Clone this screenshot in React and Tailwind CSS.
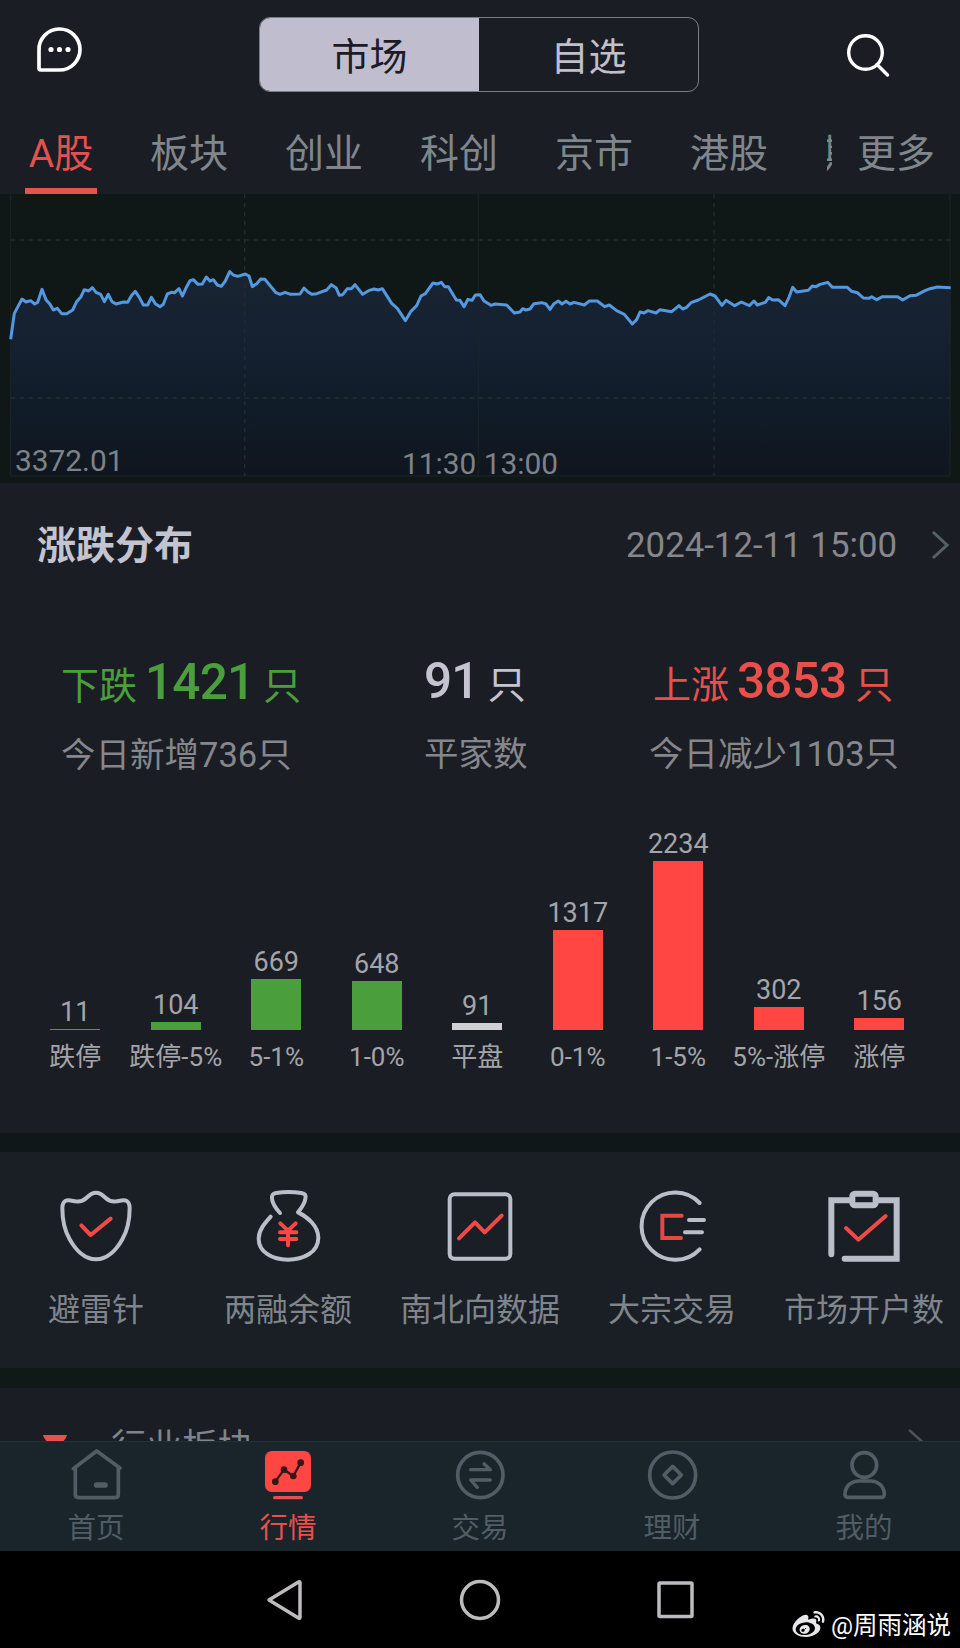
import React from 'react';
import { FaWeibo } from 'react-icons/fa';

const tabs = ['板块', '创业', '科创', '京市', '港股'];

// Intraday index line, in the units of the chart's viewBox
const linePoints =
  '32,448 43,370 66,327 78,336 92,332 104,342 113,337 126,298 138,329 150,343 160,360 172,355 185,371 200,371 218,360 230,335 243,320 253,299 266,303 277,293 288,307 302,313 313,335 325,313 336,335 348,342 370,336 383,337 395,316 406,304 418,322 430,345 443,345 454,322 466,341 480,350 490,343 502,312 514,307 524,308 537,296 547,318 560,290 570,272 580,269 594,283 607,282 619,261 630,273 640,269 652,285 664,289 676,273 689,245 700,255 713,259 736,252 747,258 757,290 770,281 782,267 795,268 807,283 828,308 840,313 855,307 872,313 900,312 912,294 924,306 936,313 950,311 980,300 994,284 1008,293 1018,316 1028,314 1042,296 1054,296 1065,284 1088,313 1108,301 1122,297 1135,300 1147,296 1175,340 1192,355 1216,392 1232,365 1250,347 1263,318 1276,311 1299,279 1312,282 1324,277 1334,290 1345,290 1369,330 1380,331 1392,350 1404,328 1416,331 1426,315 1440,314 1452,333 1473,346 1485,342 1520,345 1543,369 1560,366 1568,356 1578,360 1590,357 1602,341 1625,338 1638,342 1650,358 1662,341 1675,333 1686,342 1698,334 1710,342 1722,337 1753,345 1768,333 1792,333 1814,350 1828,345 1850,362 1873,373 1897,402 1910,389 1920,366 1932,369 1944,362 1968,369 1980,359 2015,365 2037,347 2048,357 2060,352 2073,338 2095,330 2130,312 2145,318 2166,346 2178,331 2204,347 2224,336 2248,347 2262,333 2272,345 2296,337 2306,323 2318,330 2335,329 2355,347 2367,322 2378,292 2390,306 2425,301 2437,288 2448,290 2460,283 2483,277 2497,292 2542,292 2555,304 2572,308 2590,324 2607,325 2615,320 2630,329 2648,320 2693,320 2708,330 2730,317 2748,316 2775,302 2790,296 2812,291 2852,293';

const bars = [
  { label: '跌停', value: 11, height: 1, color: 'bg-[#4a9f3c]' },
  { label: '跌停-5%', value: 104, height: 8, color: 'bg-[#4a9f3c]' },
  { label: '5-1%', value: 669, height: 51, color: 'bg-[#4a9f3c]' },
  { label: '1-0%', value: 648, height: 49, color: 'bg-[#4a9f3c]' },
  { label: '平盘', value: 91, height: 7, color: 'bg-[#cfcfd4]' },
  { label: '0-1%', value: 1317, height: 100, color: 'bg-[#ff4643]' },
  { label: '1-5%', value: 2234, height: 169, color: 'bg-[#ff4643]' },
  { label: '5%-涨停', value: 302, height: 23, color: 'bg-[#ff4643]' },
  { label: '涨停', value: 156, height: 12, color: 'bg-[#ff4643]' }
];

const ShieldIcon = () => (
  <>
    <path d="M120 20C106 20 99 28 91 36C83 44 74 48 58 46C47 44 38 41 29 44C21 48 19 55 19 66C19 102 25 132 41 160C58 191 86 220 120 220C154 220 182 191 199 160C215 132 221 102 221 66C221 55 219 48 211 44C202 41 193 44 182 46C166 48 157 44 149 36C141 28 134 20 120 20Z" />
    <path d="M76 118L104 147L164 98" className="stroke-[#f04a47]" />
  </>
);

const MoneyBagIcon = () => (
  <>
    <path d="M96 81C84 68 73 55 72 38C71 27 74 23 84 21C108 17 136 17 160 21C171 23 175 27 172 38C170 54 160 66 150 79C178 92 211 120 211 155C211 200 165 221 120 221C72 221 32 198 32 158C32 132 50 112 68 92" />
    <path d="M97 112L120 134L143 112M120 134V178M96 139H145M96 159H145" className="stroke-[#ff4643]" />
  </>
);

const TrendBoxIcon = () => (
  <>
    <rect x="29" y="25" width="182" height="193" rx="14" />
    <path d="M57 157L105 109L134 139L185 89" className="stroke-[#f04a47]" />
  </>
);

const BlockTradeIcon = () => (
  <>
    <path d="M203 51A101 101 0 1 0 203 190" />
    <path d="M171 102H216M159 139H210" />
    <path d="M149 89H91V156H147" className="stroke-[#e04a47]" strokeLinejoin="miter" />
  </>
);

const ClipboardIcon = () => (
  <>
    <path d="M22 205V43H76M164 43H218V218H62" strokeWidth="18" strokeLinejoin="miter" />
    <rect x="85" y="23" width="70" height="35" rx="8" strokeWidth="18" />
    <path d="M66 126L103 161L185 90" className="stroke-[#f04a47]" />
  </>
);

const tools = [
  { name: '避雷针', icon: ShieldIcon },
  { name: '两融余额', icon: MoneyBagIcon },
  { name: '南北向数据', icon: TrendBoxIcon },
  { name: '大宗交易', icon: BlockTradeIcon },
  { name: '市场开户数', icon: ClipboardIcon }
];

const HomeIcon = () => (
  <>
    <path d="M22 71L92 18L162 69M28 70V148Q28 158 38 158H147Q157 158 157 148V70" />
    <path d="M92 120H117" strokeWidth="17" />
  </>
);

const MarketIcon = () => (
  <>
    <rect x="21" y="18" width="138" height="123" rx="20" className="fill-[#ff4643] stroke-none" />
    <path d="M52 110L78 74L106 93L128 53" className="stroke-[#3a1518]" strokeWidth="7" />
    <g className="fill-[#3a1518] stroke-none">
      <circle cx="52" cy="110" r="10" />
      <circle cx="78" cy="74" r="10" />
      <circle cx="106" cy="93" r="10" />
      <circle cx="128" cy="53" r="10" />
    </g>
    <path d="M50 158H130" strokeWidth="10" />
  </>
);

const TradeIcon = () => (
  <>
    <circle cx="91" cy="90" r="68" />
    <path d="M62 74H121L102 56M121 105H62L82 127" strokeWidth="10" />
  </>
);

const FinanceIcon = () => (
  <>
    <circle cx="92" cy="90" r="69" />
    <path d="M92 64L118 90L92 116L66 90Z" />
  </>
);

const ProfileIcon = () => (
  <>
    <circle cx="91" cy="60" r="37" />
    <path d="M33 148C33 122 54 108 74 108H110C130 108 151 122 151 148Q151 157 143 157H41Q33 157 33 148Z" />
  </>
);

const navItems = [
  { name: '首页', icon: HomeIcon },
  { name: '行情', icon: MarketIcon, active: true },
  { name: '交易', icon: TradeIcon },
  { name: '理财', icon: FinanceIcon },
  { name: '我的', icon: ProfileIcon }
];

const Header = () => (
  <header className="h-[91px] flex items-start justify-between pl-[36px] pr-[70px]">
    <svg className="w-[48px] h-[48px] mt-[26px]" viewBox="0 0 48 48" fill="none">
      <path d="M3 24A20.5 20.5 0 1 1 23.5 44H5Q3 44 3 42Z" stroke="#fff" strokeWidth="3.7" />
      <circle cx="15" cy="23.5" r="2.6" fill="#fff" />
      <circle cx="23.5" cy="23.5" r="2.6" fill="#fff" />
      <circle cx="32" cy="23.5" r="2.6" fill="#fff" />
    </svg>
    <div className="w-[440px] h-[75px] mt-[17px] ml-[28px] flex rounded-[11px] border border-[#7c7c86] overflow-hidden text-[38px] leading-none">
      <div className="w-[219px] pt-[5px] flex items-center justify-center bg-[#c0bdce] text-[#1c1b26]">市场</div>
      <div className="flex-1 pt-[5px] flex items-center justify-center text-[#c0bfcb]">自选</div>
    </div>
    <svg className="w-[44px] h-[44px] mt-[34px]" viewBox="0 0 44 44" fill="none" stroke="#fff" strokeWidth="3.4" strokeLinecap="round">
      <circle cx="19.5" cy="18.5" r="16.8" />
      <path d="M31 30.5L41.500 41" />
    </svg>
  </header>
);

const MarketTabs = () => (
  <nav className="h-[103px] flex pl-[25px] text-[39px] leading-[40px] text-[#7f878d]">
    <div className="w-[72px] mr-[53px] flex flex-col justify-between items-center text-[#e3524e]">
      <span className="mt-[43px]">A股</span>
      <span className="w-full h-[6px] bg-[#e3554f]" />
    </div>
    {tabs.map((tab) => (
      <span key={tab} className="mt-[43px] w-[135px] shrink-0">{tab}</span>
    ))}
    {/* next tab, scrolled mostly under the "more" button */}
    <span className="mt-[43px] ml-[2px] w-[5px] shrink-0 overflow-hidden -indent-[4px]">期</span>
    <span className="mt-[43px] ml-[25px] shrink-0">更多</span>
  </nav>
);

const IndexChart = () => (
  <section className="h-[289px] bg-[#101717]">
    <svg className="block w-full h-full" viewBox="0 12 2880 867" fill="none">
      <defs>
        <linearGradient id="area" x1="0" y1="240" x2="0" y2="860" gradientUnits="userSpaceOnUse">
          <stop offset="0" stopColor="#1a2433" />
          <stop offset="0.4" stopColor="#142030" />
          <stop offset="0.7" stopColor="#0f1b26" />
          <stop offset="1" stopColor="#10161f" />
        </linearGradient>
      </defs>
      <polygon points={`${linePoints} 2852,858 32,858`} fill="url(#area)" />
      <g stroke="#232b2c" strokeWidth="4">
        <path d="M32 12V858H2850V12M1435 12V858" strokeWidth="3" stroke="#1c2526" />
        <path d="M32 150H2850M32 624H2850M734 12V858M2142 12V858" strokeDasharray="13 14" />
      </g>
      <polyline points={linePoints} stroke="#5498e0" strokeWidth="9" strokeLinejoin="round" />
      <g fill="#7f8287" className="font-['Roboto'] text-[89.500px]">
        <text x="45" y="843">3372.01</text>
        <text x="1206" y="852">11:30 13:00</text>
      </g>
    </svg>
  </section>
);

const Stat = ({ prefix, count, note, className, rowClass }) => (
  <div className={className}>
    <div className={`flex items-baseline text-[38px] leading-[56px] ${rowClass || ''}`}>
      {prefix && <span className="mr-[8px]">{prefix}</span>}
      <span className="text-[49.500px] font-medium tracking-[-0.8px]">{count}</span>
      <span className="ml-[9px]">只</span>
    </div>
    <div className="mt-[21px] text-[34.500px] leading-[40px] text-[#85878c]">{note}</div>
  </div>
);

const Distribution = () => (
  <section className="h-[650px]">
    <div className="h-[126px] pl-[37px] pr-[11px] flex items-center">
      <h2 className="text-[39px] leading-none font-bold text-[#c3c4d0]">涨跌分布</h2>
      <span className="ml-auto mb-[2px] text-[34.800px] leading-none text-[#85878c]">2024-12-11 15:00</span>
      <svg className="ml-[34px] mb-[3px] w-[18px] h-[30px]" viewBox="0 0 18 30" fill="none" stroke="#566167" strokeWidth="3">
        <path d="M2 2L16 15L2 28" />
      </svg>
    </div>
    <div className="h-[224px] pt-[44px] flex">
      <Stat prefix="下跌" count="1421" note="今日新增736只" className="w-[364px] pl-[61px] pt-[1px] text-[#4a9f3c]" />
      <Stat count="91" note="平家数" className="w-[225px] pl-[60px] text-[#c3c4d0]" />
      <Stat prefix="上涨" count="3853" note="今日减少1103只" className="pl-[60px] text-[#e9504c]" rowClass="pl-[4px]" />
    </div>
    <div className="h-[240px] pl-[25px] flex text-[#a3a5a9]">
      {bars.map((bar) => (
        <div key={bar.label} className="w-[100.500px] flex flex-col items-center justify-end whitespace-nowrap">
          <span className="text-[27px] leading-[30px] mb-[2px]">{bar.value}</span>
          <div className={`w-[50px] shrink-0 ${bar.color}`} style={{ height: bar.height }} />
          <span className="mt-[11px] text-[26px] leading-[32px]">{bar.label}</span>
        </div>
      ))}
    </div>
  </section>
);

const ToolGrid = () => (
  <section className="h-[216px] grid grid-cols-5 bg-[#1a1e25]">
    {tools.map((tool) => {
      const Icon = tool.icon;
      return (
        <div key={tool.name} className="flex flex-col items-center pt-[34px]">
          <svg className="w-[80px] h-[80px]" viewBox="0 0 240 240" fill="none" stroke="#b9bec9" strokeWidth="12" strokeLinecap="round" strokeLinejoin="round">
            <Icon />
          </svg>
          <span className="mt-[24px] text-[32px] leading-[40px] text-[#7f858b] whitespace-nowrap">{tool.name}</span>
        </div>
      );
    })}
  </section>
);

const BottomNav = () => (
  <nav className="h-[110px] grid grid-cols-5 bg-[#19242b] border-t border-[#213338]">
    {navItems.map((item) => {
      const Icon = item.icon;
      return (
        <div
          key={item.name}
          className={`flex flex-col items-center pt-[3px] ${item.active ? 'text-[#e9504c]' : 'text-[#515c64]'}`}
        >
          <svg className="w-[60px] h-[60px]" viewBox="0 0 180 180" fill="none" stroke="currentColor" strokeWidth="11" strokeLinecap="round" strokeLinejoin="round">
            <Icon />
          </svg>
          <span className="mt-[6px] text-[28.500px] leading-[36px]">{item.name}</span>
        </div>
      );
    })}
  </nav>
);

const SystemBar = () => (
  <footer className="relative h-[97px] bg-black">
    <svg className="block w-full h-full" viewBox="0 0 960 97" fill="none" stroke="#bdbbbf" strokeWidth="3.5" strokeLinejoin="round">
      <path d="M269 49L298.500 31Q300 30 300 32V66Q300 68 298.500 67Z" />
      <circle cx="480" cy="49" r="18.500" />
      <rect x="659" y="32" width="33" height="33.500" rx="1" />
    </svg>
    <div className="absolute right-[9px] bottom-[5px] flex items-center text-white">
      <FaWeibo className="w-[35px] h-[32px] mr-[5px] mb-[2px] text-[#e8e8ea]" />
      <span className="text-[24.500px] leading-[30px]">@周雨涵说</span>
    </div>
  </footer>
);

const App = () => {
  return (
    <div className="w-[960px] h-[1648px] overflow-hidden bg-[#1b1d24] font-['Roboto','Noto_Sans_CJK_SC',sans-serif]">
      <Header />
      <MarketTabs />
      <IndexChart />
      <Distribution />
      <div className="h-[19px] bg-[#101719]" />
      <ToolGrid />
      <div className="h-[20px] bg-[#111918]" />
      {/* Industry sectors, cut off by the bottom bar */}
      <section className="h-[53px] overflow-hidden flex items-start bg-[#1a1e24]">
        <svg className="ml-[43px] mt-[47px] w-[24px] h-[12px]" viewBox="0 0 24 12">
          <path d="M0 0H24Q23 5 17 9H7Q1 5 0 0Z" fill="#e9504c" />
        </svg>
        <span className="ml-[44px] mt-[39px] text-[35.500px] leading-[40px] text-[#7f858b]">行业板块</span>
        <svg className="ml-auto mr-[20px] mt-[41px] w-[32px] h-[30px]" viewBox="0 0 32 30" fill="none" stroke="#4c5258" strokeWidth="2.5">
          <path d="M1 1L17 15L1 29" />
        </svg>
      </section>
      <BottomNav />
      <SystemBar />
    </div>
  );
};

export default App;
